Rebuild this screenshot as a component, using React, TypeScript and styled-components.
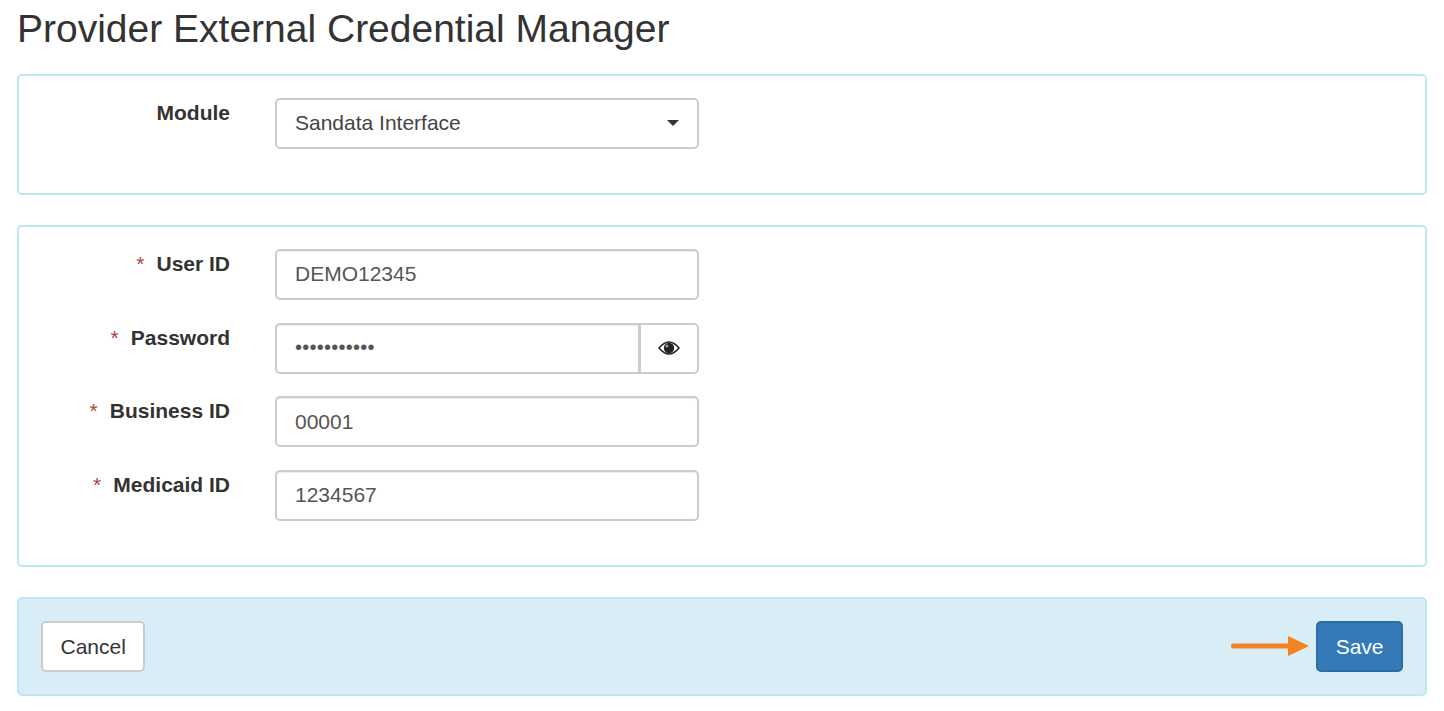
import React from 'react';
import styled, { createGlobalStyle } from 'styled-components';

const GlobalStyle = createGlobalStyle`
  html, body {
    margin: 0;
    background: #fff;
  }
  * {
    box-sizing: border-box;
  }
`;

const Page = styled.div`
  width: 1444px;
  height: 711px;
  padding: 0 17px;
  overflow: hidden;
  font-family: 'Liberation Sans', Arial, sans-serif;
  color: #333;
`;

const Title = styled.h1`
  margin: 0;
  height: 74px;
  padding: 7px 0 0 0;
  font-size: 39px;
  line-height: 43px;
  font-weight: 400;
  color: #333;
`;

const Panel = styled.div`
  border: 2px solid #bce8f1;
  border-radius: 5px;
  background: #fff;
  padding: 22px 0 21.33px;
  margin-bottom: 30px;
`;

const Row = styled.div`
  display: grid;
  grid-template-columns: 211px 424px;
  column-gap: 45px;
  margin-bottom: 22.67px;
`;

const Label = styled.label`
  display: block;
  padding-top: 3px;
  text-align: right;
  font-size: 21px;
  line-height: 24px;
  font-weight: 700;
  color: #333;
`;

const Required = styled.span`
  margin-right: 12px;
  font-weight: 400;
  color: #a94442;
`;

const Field = styled.div`
  height: 51px;
  padding: 0 18px;
  display: flex;
  align-items: center;
  border: 2px solid #ccc;
  border-radius: 5px;
  background: #fff;
  box-shadow: inset 0 1px 1px rgba(0, 0, 0, 0.075);
  font-size: 21px;
  color: #555;
`;

const SelectField = styled(Field)`
  justify-content: space-between;
  padding-bottom: 2px;
  box-shadow: none;
  color: #444;
`;

const Caret = styled.span`
  width: 0;
  height: 0;
  border-left: 6px solid transparent;
  border-right: 6px solid transparent;
  border-top: 6px solid #333;
`;

const InputGroup = styled.div`
  display: flex;
  height: 51px;
`;

const GroupField = styled(Field)`
  flex: 1;
  border-radius: 5px 0 0 5px;
  border-right: 0;
  font-size: 20px;
  letter-spacing: 0.25px;
  padding-bottom: 2px;
`;

const Addon = styled.div`
  width: 61px;
  display: flex;
  align-items: center;
  justify-content: center;
  border: 2px solid #ccc;
  border-radius: 0 5px 5px 0;
  border-left-width: 3px;
  background: #fff;
`;

const Footer = styled.div`
  height: 99px;
  display: flex;
  align-items: center;
  justify-content: space-between;
  padding: 0 22px;
  border: 2px solid #bce8f1;
  border-radius: 5px;
  background: #d9edf7;
`;

const Button = styled.button<{ $primary?: boolean }>`
  height: 51px;
  padding: 2px 17.5px 0;
  border: 2px solid ${(p) => (p.$primary ? '#2e6da4' : '#ccc')};
  border-radius: 5px;
  background: ${(p) => (p.$primary ? '#337ab7' : '#fff')};
  color: ${(p) => (p.$primary ? '#fff' : '#333')};
  font-family: inherit;
  font-size: 21px;
`;

const SaveGroup = styled.div`
  display: flex;
  align-items: center;
  gap: 6px;
`;

const EyeIcon = () => (
  <svg width="22" height="14" viewBox="0 0 22 14">
    <path
      d="M1 7C4.7 2.6 7.8 1 11 1S17.3 2.6 21 7C17.3 11.4 14.2 13 11 13S4.7 11.4 1 7Z"
      fill="#fff"
      stroke="#222"
      strokeWidth="1.5"
    />
    <circle cx="11" cy="7" r="5.2" fill="#222" />
    <circle cx="8.9" cy="4.9" r="1.5" fill="#999" />
  </svg>
);

const fields = [
  { label: 'User ID', value: 'DEMO12345' },
  { label: 'Password', value: '•••••••••••', secret: true },
  { label: 'Business ID', value: '00001' },
  { label: 'Medicaid ID', value: '1234567' },
];

const App: React.FC = () => (
  <>
    <GlobalStyle />
    <Page>
      <Title>Provider External Credential Manager</Title>
      <Panel>
        <Row>
          <Label>Module</Label>
          <SelectField>
            Sandata Interface
            <Caret />
          </SelectField>
        </Row>
      </Panel>
      <Panel>
        {fields.map((field) => (
          <Row key={field.label}>
            <Label>
              <Required>*</Required>
              {field.label}
            </Label>
            {field.secret ? (
              <InputGroup>
                <GroupField>{field.value}</GroupField>
                <Addon>
                  <EyeIcon />
                </Addon>
              </InputGroup>
            ) : (
              <Field>{field.value}</Field>
            )}
          </Row>
        ))}
      </Panel>
      <Footer>
        <Button>Cancel</Button>
        <SaveGroup>
          <svg width="79" height="22" viewBox="0 0 79 22">
            <path d="M2.5 11H57" stroke="#f58220" strokeWidth="5" strokeLinecap="round" />
            <path d="M57 1L78 11L57 21Z" fill="#f58220" />
          </svg>
          <Button $primary>Save</Button>
        </SaveGroup>
      </Footer>
    </Page>
  </>
);

export default App;
